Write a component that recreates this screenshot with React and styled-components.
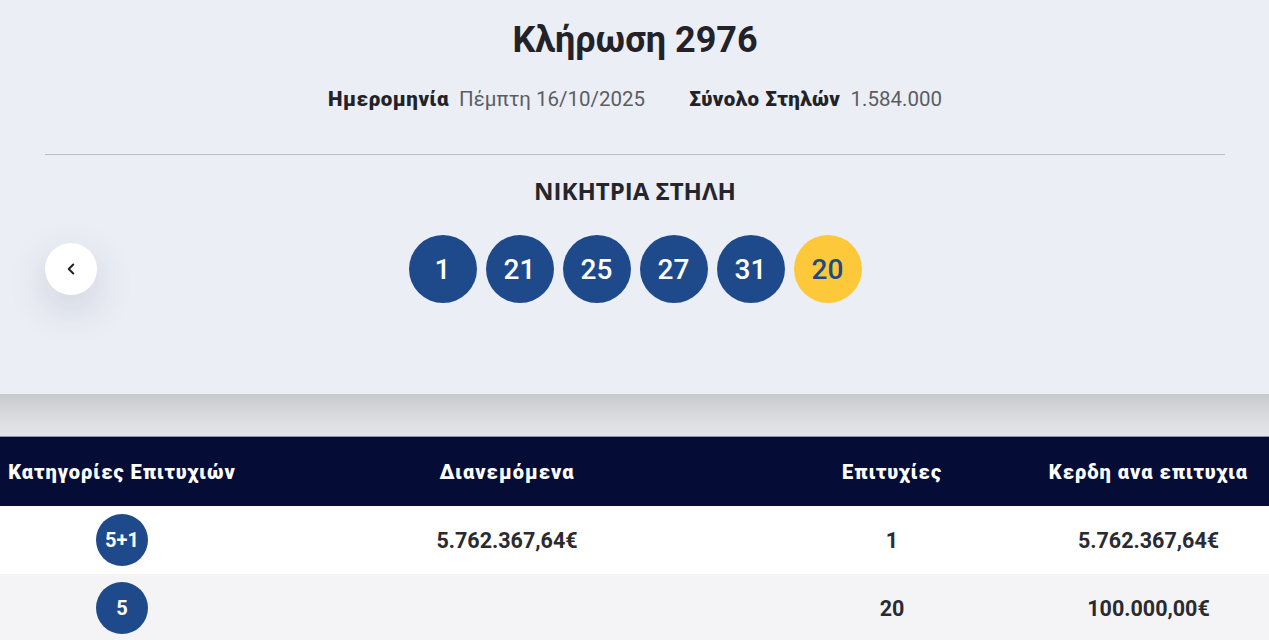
import styled, { createGlobalStyle } from "styled-components";
import { ChevronLeft } from "lucide-react";

const GlobalStyle = createGlobalStyle`
    * { box-sizing: border-box; }
    body {
        margin: 0;
        font-family: Roboto, "Liberation Sans", sans-serif;
        background: #e3e4e8;
        overflow: hidden;
    }
`;

const numeros = [1, 21, 25, 27, 31];
const bonus = 20;

const categorias = [
    { nome: "5+1", diane: "5.762.367,64€", epit: "1", kerdi: "5.762.367,64€" },
    { nome: "5", diane: "", epit: "20", kerdi: "100.000,00€" },
];

const colunas = [
    { titulo: "Κατηγορίες Επιτυχιών", pad: 0 },
    { titulo: "Διανεμόμενα", pad: 0 },
    { titulo: "Επιτυχίες", pad: 0 },
    { titulo: "Κερδη ανα επιτυχια", pad: 14 },
];

export default function App() {
    return (
        <>
            <GlobalStyle />
            <Painel>
                <Titulo>Κλήρωση 2976</Titulo>
                <Meta>
                    <MetaItem>
                        <b>Ημερομηνία</b> Πέμπτη 16/10/2025
                    </MetaItem>
                    <MetaItem>
                        <b>Σύνολο Στηλών</b> 1.584.000
                    </MetaItem>
                </Meta>
                <Divisor />
                <Subtitulo>ΝΙΚΗΤΡΙΑ ΣΤΗΛΗ</Subtitulo>
                <LinhaBolas>
                    <BotaoVoltar aria-label="previous">
                        <ChevronLeft size={18} strokeWidth={2.6} color="#222" />
                    </BotaoVoltar>
                    <Bolas>
                        {numeros.map(n => (
                            <Bola key={n}>{n}</Bola>
                        ))}
                        <Bola bonus>{bonus}</Bola>
                    </Bolas>
                    <div />
                </LinhaBolas>
            </Painel>
            <Sombra />
            <Tabela>
                <Cabecalho>
                    {colunas.map(c => (
                        <Celula key={c.titulo} $pad={c.pad}>{c.titulo}</Celula>
                    ))}
                </Cabecalho>
                {categorias.map((cat, i) => (
                    <Linha key={cat.nome} $alt={i % 2 === 1}>
                        <Celula><Selo>{cat.nome}</Selo></Celula>
                        <Celula>{cat.diane}</Celula>
                        <Celula>{cat.epit}</Celula>
                        <Celula $pad={14}>{cat.kerdi}</Celula>
                    </Linha>
                ))}
            </Tabela>
        </>
    );
}

const Painel = styled.section`
    background: #ebeef5;
    padding: 19px 44px 91px 45px;
    display: flex;
    flex-direction: column;
    align-items: stretch;
`;

const Titulo = styled.h1`
    margin: 0;
    text-align: center;
    font-size: 36px;
    line-height: 42px;
    font-weight: 700;
    color: #222228;
`;

const Meta = styled.div`
    margin-top: 26px;
    display: flex;
    justify-content: center;
    gap: 44px;
    font-size: 20.5px;
    line-height: 24px;
`;

const MetaItem = styled.span`
    color: #5b5d63;

    b {
        color: #222228;
        font-weight: 900;
        letter-spacing: 0.5px;
        margin-right: 5px;
    }
`;

const Divisor = styled.hr`
    margin: 43px 0 0 0;
    border: none;
    border-top: 1px solid #b9bcc4;
`;

const Subtitulo = styled.h2`
    margin: 20px 0 0 0;
    text-align: center;
    font-family: "Open Sans", Roboto, sans-serif;
    font-size: 24px;
    line-height: 32px;
    font-weight: 700;
    color: #25262b;
`;

const LinhaBolas = styled.div`
    margin-top: 28px;
    display: grid;
    grid-template-columns: 1fr auto 1fr;
    align-items: center;
`;

const BotaoVoltar = styled.button`
    width: 52px;
    height: 52px;
    border-radius: 50%;
    border: none;
    background: #ffffff;
    display: flex;
    justify-content: center;
    align-items: center;
    box-shadow: 0 14px 40px rgba(40, 50, 80, 0.16);
    cursor: pointer;
    padding: 0;
`;

const Bolas = styled.div`
    display: flex;
    gap: 9px;
`;

const Bola = styled.div`
    width: 68px;
    height: 68px;
    border-radius: 50%;
    background: ${props => props.bonus ? "#fdc93b" : "#1e4a8c"};
    color: ${props => props.bonus ? "#1e4a8c" : "#ffffff"};
    display: flex;
    justify-content: center;
    align-items: center;
    font-size: 28px;
    font-weight: 500;
`;

const Sombra = styled.div`
    height: 43px;
    background: linear-gradient(180deg, #c8c9cd 0%, #d9dadd 50%, #e4e5e8 100%);
    border-bottom: 1px solid #8f95a8;
`;

const Tabela = styled.div`
    display: flex;
    flex-direction: column;
`;

const Cabecalho = styled.div`
    display: grid;
    grid-template-columns: 244px 526px 244px 1fr;
    height: 69px;
    align-items: center;
    background: #050d36;
    color: #ffffff;
    font-size: 20px;
    font-weight: 900;
    letter-spacing: 1px;
`;

const Linha = styled.div`
    display: grid;
    grid-template-columns: 244px 526px 244px 1fr;
    height: 68px;
    align-items: center;
    background: ${props => props.$alt ? "#f4f4f7" : "#ffffff"};
    color: #2a2b30;
    font-size: 21.5px;
    font-weight: 700;
`;

const Celula = styled.div`
    display: flex;
    justify-content: center;
    align-items: center;
    padding-left: ${props => props.$pad || 0}px;
    white-space: nowrap;
`;

const Selo = styled.span`
    width: 52px;
    height: 52px;
    border-radius: 50%;
    background: #1e4a8c;
    color: #ffffff;
    display: flex;
    justify-content: center;
    align-items: center;
    font-size: 20px;
    font-weight: 700;
    letter-spacing: 0;
`;
